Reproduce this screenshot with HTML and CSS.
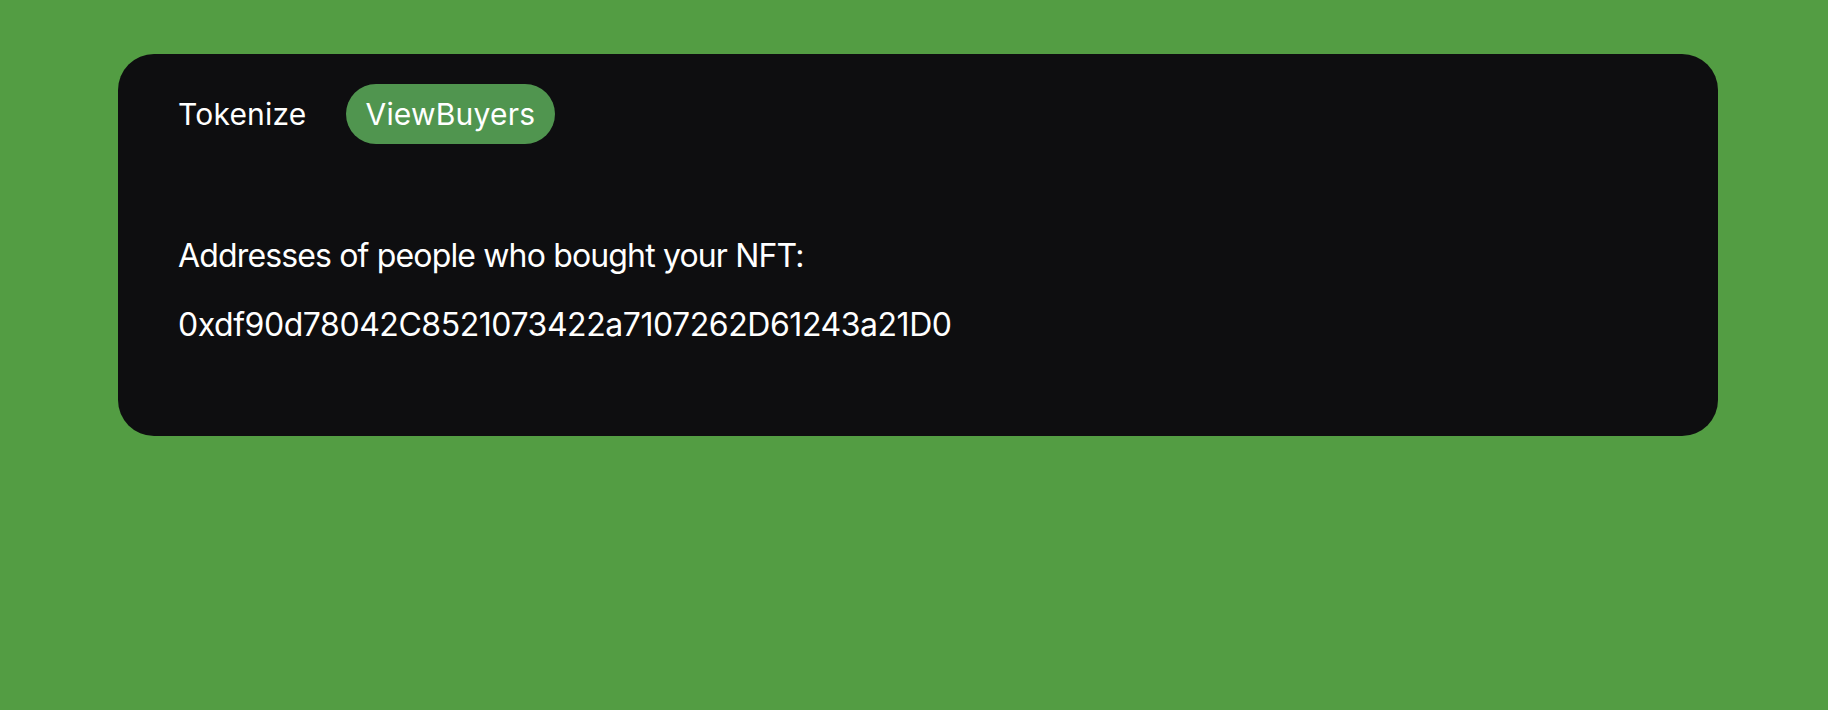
FILE: index.html
```html
<!DOCTYPE html>
<html lang="en">
<head>
<meta charset="utf-8">
<title>NFT Buyers</title>
<link rel="stylesheet" href="styles.css">
</head>
<body>
  <main class="page">
    <section class="card">
      <nav class="tabs">
        <span class="tab">Tokenize</span>
        <span class="tab tab-active">ViewBuyers</span>
      </nav>
      <div class="content">
        <p class="line line-label">Addresses of people who bought your NFT:</p>
        <p class="line line-address">0xdf90d78042C8521073422a7107262D61243a21D0</p>
      </div>
    </section>
  </main>
</body>
</html>
```

FILE: styles.css
```css
html, body {
  margin: 0;
  padding: 0;
}

body {
  background: #539d43;
  font-family: Inter, "Noto Sans", "Liberation Sans", sans-serif;
  color: #ffffff;
  min-height: 710px;
}

.page {
  padding: 54px 110px 0 118px;
}

.card {
  background: #0e0e10;
  border-radius: 36px;
  padding: 30px 40px 0 40px;
  height: 382px;
  box-sizing: border-box;
}

.tabs {
  display: flex;
  gap: 19px;
  align-items: center;
}

.tab {
  font-size: 30px;
  line-height: 60px;
  height: 60px;
  padding: 0 20px;
  border-radius: 30px;
  letter-spacing: 0.2px;
}

.tab-active {
  background: #50954f;
}

.content {
  padding: 92px 20px 0 20px;
  display: flex;
  flex-direction: column;
  gap: 29px;
}

.line {
  margin: 0;
  font-size: 32px;
  line-height: 40px;
}

.line-label {
  letter-spacing: -0.85px;
}

.line-address {
  letter-spacing: -0.45px;
}
```
